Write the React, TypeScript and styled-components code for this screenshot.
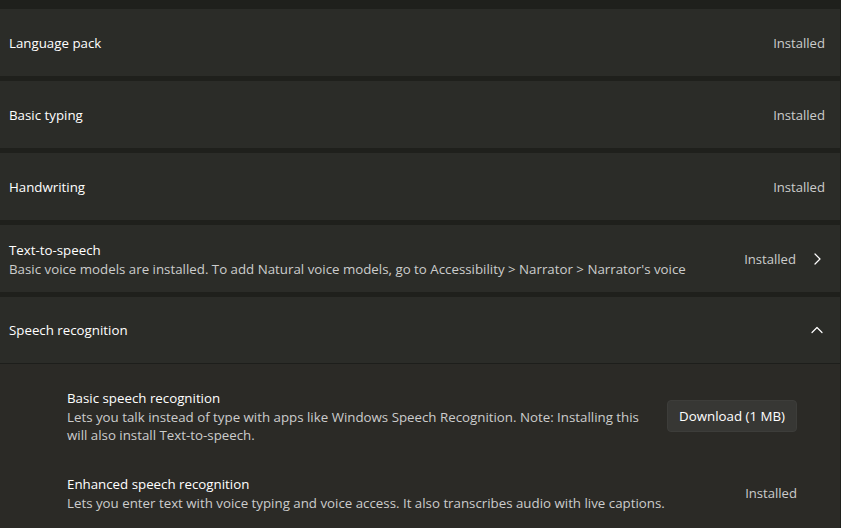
import * as React from 'react';
import styled, {createGlobalStyle} from 'styled-components';

const GlobalStyle = createGlobalStyle`
  html, body {
    margin: 0;
    padding: 0;
    background-color: #1f201c;
  }

  body {
    font-family: "Open Sans", "Noto Sans", sans-serif;
    color: #ffffff;
    overflow: hidden;
  }
`

const Page = styled.div`
  display: flex;
  flex-direction: column;
  gap: 5px;
  padding-top: 9px;
  width: 840px;
  height: 528px;
  box-sizing: border-box;
`

const Card = styled.div<{ $open?: boolean }>`
  display: flex;
  align-items: center;
  justify-content: space-between;
  min-height: 67px;
  box-sizing: border-box;
  padding: 0 15px 0 9px;
  background-color: #2b2c28;
  border-bottom: ${p => p.$open ? '1px solid #1d1e1b' : 'none'};
`

const Expander = styled.div`
  display: flex;
  flex-direction: column;
  flex: 1;
`

const ExpanderContent = styled.div`
  display: flex;
  flex-direction: column;
  gap: 30px;
  padding: 24px 43px 0 67px;
  background-color: #2b2a26;
  flex: 1;
`

const SubRow = styled.div`
  display: flex;
  align-items: center;
  justify-content: space-between;
`

const TextBlock = styled.div`
  display: flex;
  flex-direction: column;
`

const Title = styled.div`
  font-size: 13.3px;
  line-height: 20px;
  color: #ffffff;
`

const Description = styled.div`
  font-size: 13.3px;
  line-height: 18px;
  color: #cccccc;
`

const Actions = styled.div`
  display: flex;
  align-items: center;
  gap: 13px;
`

const Status = styled.div`
  font-size: 13.1px;
  line-height: 20px;
  color: #cccccc;
`

const Button = styled.button`
  height: 32px;
  padding: 0 11px;
  border-radius: 4px;
  border: 1px solid #3d3d3a;
  background-color: #373734;
  color: #ffffff;
  font-family: inherit;
  font-size: 13.3px;
  cursor: pointer;
`

const Chevron: React.FC<{ dir: 'right' | 'up' }> = ({dir}) => (
    <svg width="16" height="16" viewBox="0 0 16 16" fill="none" stroke="#ffffff" strokeWidth="1.2" strokeLinecap="round" strokeLinejoin="round">
        {dir === 'right'
            ? <polyline points="6,3 11,8 6,13"/>
            : <polyline points="3,10.5 8,5.5 13,10.5"/>}
    </svg>
)

const simpleRows = ['Language pack', 'Basic typing', 'Handwriting'];

const App: React.FC = () => {
    return (
        <>
            <GlobalStyle/>
            <Page>
                {simpleRows.map(name =>
                    <Card key={name}>
                        <Title>{name}</Title>
                        <Status>Installed</Status>
                    </Card>
                )}
                <Card>
                    <TextBlock>
                        <Title>Text-to-speech</Title>
                        <Description>Basic voice models are installed. To add Natural voice models, go to Accessibility &gt; Narrator &gt; Narrator's voice</Description>
                    </TextBlock>
                    <Actions>
                        <Status>Installed</Status>
                        <Chevron dir={'right'}/>
                    </Actions>
                </Card>
                <Expander>
                    <Card $open>
                        <Title>Speech recognition</Title>
                        <Chevron dir={'up'}/>
                    </Card>
                    <ExpanderContent>
                        <SubRow>
                            <TextBlock>
                                <Title>Basic speech recognition</Title>
                                <Description>
                                    Lets you talk instead of type with apps like Windows Speech Recognition. Note: Installing this<br/>
                                    will also install Text-to-speech.
                                </Description>
                            </TextBlock>
                            <Button>Download (1 MB)</Button>
                        </SubRow>
                        <SubRow>
                            <TextBlock>
                                <Title>Enhanced speech recognition</Title>
                                <Description>Lets you enter text with voice typing and voice access. It also transcribes audio with live captions.</Description>
                            </TextBlock>
                            <Status>Installed</Status>
                        </SubRow>
                    </ExpanderContent>
                </Expander>
            </Page>
        </>
    )
}

export default App;
